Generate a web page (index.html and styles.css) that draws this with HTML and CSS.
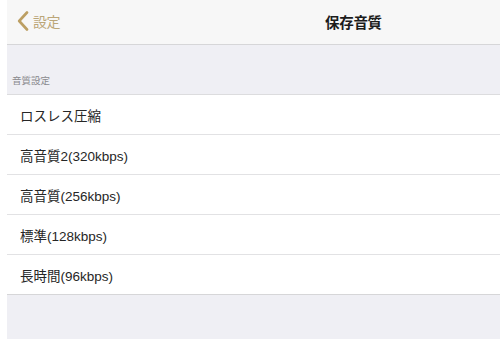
FILE: index.html
```html
<!DOCTYPE html>
<html lang="ja">
<head>
<meta charset="utf-8">
<link rel="stylesheet" href="styles.css">
</head>
<body>
<div class="screen">
  <header class="navbar">
    <div class="back">
      <svg class="chev" width="12" height="20" viewBox="0 0 12 20"><path d="M10 1.5 L2.2 10 L10 18.5" fill="none" stroke="#bc9f63" stroke-width="2.6" stroke-linecap="round" stroke-linejoin="round"/></svg>
      <span class="back-label">設定</span>
    </div>
    <div class="title">保存音質</div>
  </header>
  <div class="section-head">音質設定</div>
  <ul class="list">
    <li class="row">ロスレス圧縮</li>
    <li class="row">高音質2(320kbps)</li>
    <li class="row">高音質(256kbps)</li>
    <li class="row">標準(128kbps)</li>
    <li class="row">長時間(96kbps)</li>
  </ul>
  <div class="footer"></div>
</div>
</body>
</html>
```

FILE: styles.css
```css
html, body {
  margin: 0;
  padding: 0;
  background: #ffffff;
  width: 500px;
  height: 339px;
  overflow: hidden;
}
body {
  font-family: "Noto Sans CJK JP", "Noto Sans", sans-serif;
  -webkit-font-smoothing: antialiased;
}
.screen {
  margin-left: 7px;
  height: 339px;
  display: flex;
  flex-direction: column;
  background: #efeff4;
}
.navbar {
  height: 44px;
  background: #f7f7f7;
  border-bottom: 1px solid #d6d6d8;
  display: flex;
  align-items: center;
  position: relative;
}
.back {
  display: flex;
  align-items: center;
  gap: 4px;
  padding-left: 10px;
  margin-top: -2px;
}
.back-label {
  color: #bba678;
  font-size: 14px;
  letter-spacing: -0.5px;
}
.title {
  position: absolute;
  left: 318px;
  top: 11px;
  font-size: 14.5px;
  font-weight: 700;
  color: #1c1c1c;
  letter-spacing: -0.3px;
}
.section-head {
  height: 50px;
  box-sizing: border-box;
  padding: 0 0 7px 5px;
  display: flex;
  align-items: flex-end;
  font-size: 9.5px;
  color: #8a8a8e;
  border-bottom: 1px solid #dcdcde;
}
.list {
  list-style: none;
  margin: 0;
  padding: 0;
  background: #ffffff;
}
.row {
  border-bottom: 1px solid #e2e2e4;
  display: flex;
  align-items: center;
  padding-left: 13px;
  box-sizing: border-box;
  height: 40px;
  font-family: "Liberation Sans", "Noto Sans CJK JP", sans-serif;
  font-size: 13.5px;
  color: #262626;
}
.row:last-child {
  border-bottom: 1px solid #d6d6d8;
}
.footer {
  flex: 1;
  background: #efeff4;
}
```
